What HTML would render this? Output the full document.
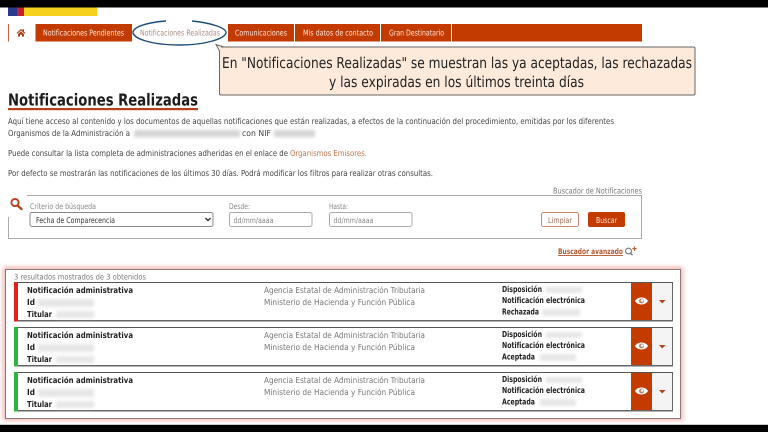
<!DOCTYPE html>
<html lang="es">
<head>
<meta charset="utf-8">
<title>Notificaciones Realizadas</title>
<style>
html,body{margin:0;padding:0;background:#fff;width:768px;height:432px;overflow:hidden}
svg{display:block}
text{font-family:"DejaVu Sans","Liberation Sans",sans-serif;white-space:pre;text-rendering:geometricPrecision}
</style>
</head>
<body>
<svg width="768" height="432" viewBox="0 0 768 432" xmlns="http://www.w3.org/2000/svg">
<defs>
<filter id="s" x="-5%" y="-5%" width="110%" height="110%"><feGaussianBlur stdDeviation="0.35"/></filter>
<filter id="b" x="-20%" y="-50%" width="140%" height="200%"><feGaussianBlur stdDeviation="1.6"/></filter>
<filter id="g" x="-3%" y="-8%" width="106%" height="116%"><feGaussianBlur stdDeviation="2"/></filter>
<g id="eye">
<path d="M-6.500 0C-4 -4.600 4 -4.600 6.500 0C4 4.600 -4 4.600 -6.500 0Z" fill="#fff"/>
<circle r="2.500" fill="#b9846c"/>
<circle cx="0.600" cy="-0.500" r="1.300" fill="#fff"/>
</g>
</defs>

<rect width="768" height="432" fill="#fff"/>

<!-- flag -->
<rect x="8" y="7" width="9" height="9" fill="#2b3a8c"/>
<rect x="17" y="7" width="7" height="9" fill="#c4202c"/>
<rect x="24" y="7" width="73" height="9" fill="#f6d21f"/>

<g filter="url(#s)">
<!-- nav -->
<rect x="8" y="24" width="1" height="17.500" fill="#c4623a"/>
<path d="M16.500 33L21 29L22.600 30.400V29.200H24V31.600L25.500 33L24.600 33.600L21 30.500L17.400 33.600ZM18 34L21 31.400L24 34V36.600H22V34.700H20V36.600H18Z" fill="#a8431f"/>
<rect x="35.500" y="24" width="96.500" height="17.500" fill="#c43a05"/>
<rect x="228" y="24" width="66" height="17.500" fill="#c43a05"/>
<rect x="295" y="24" width="85" height="17.500" fill="#c43a05"/>
<rect x="381" y="24" width="70" height="17.500" fill="#c43a05"/>
<rect x="452" y="24" width="190" height="17.500" fill="#c43a05"/>
<g font-size="8" fill="#fbe5da">
<text x="43" y="35.500" textLength="81" lengthAdjust="spacingAndGlyphs">Notificaciones Pendientes</text>
<text x="235" y="35.500" textLength="52" lengthAdjust="spacingAndGlyphs">Comunicaciones</text>
<text x="303" y="35.500" textLength="70" lengthAdjust="spacingAndGlyphs">Mis datos de contacto</text>
<text x="389" y="35.500" textLength="55" lengthAdjust="spacingAndGlyphs">Gran Destinatario</text>
</g>
<text x="140" y="35.500" font-size="8" fill="#a88c80" textLength="80" lengthAdjust="spacingAndGlyphs">Notificaciones Realizadas</text>
<path d="M166 21C146 22.500 134 27 133 32C132.500 38 150 45 180 45C205 45 224 39 226 33C226.500 28 212 23 192 21" fill="none" stroke="#1f4e79" stroke-width="1.400"/>

<!-- callout -->
<path d="M221 47H693.500Q695 47 695 48.500V93.500Q695 95 693.500 95H221Q219.500 95 219.500 93.500V51L216 44.500L224 47Z" fill="#fdeadb" stroke="#666" stroke-width="1"/>
<text x="222" y="68" font-size="15" fill="#222" textLength="470" lengthAdjust="spacingAndGlyphs">En "Notificaciones Realizadas" se muestran las ya aceptadas, las rechazadas</text>
<text x="329" y="87" font-size="15" fill="#222" textLength="255" lengthAdjust="spacingAndGlyphs">y las expiradas en los últimos treinta días</text>

<!-- title -->
<text x="8" y="105.500" font-size="16.500" font-weight="700" fill="#1a1a1a" textLength="190" lengthAdjust="spacingAndGlyphs">Notificaciones Realizadas</text>
<rect x="8" y="108" width="190" height="2.200" fill="#b5411a"/>

<!-- paragraphs -->
<g font-size="8.300" fill="#444">
<text x="8" y="124" textLength="606" lengthAdjust="spacingAndGlyphs">Aquí tiene acceso al contenido y los documentos de aquellas notificaciones que están realizadas, a efectos de la continuación del procedimiento, emitidas por los diferentes</text>
<text x="8" y="136" textLength="122" lengthAdjust="spacingAndGlyphs">Organismos de la Administración a</text>
<text x="242" y="136" textLength="29" lengthAdjust="spacingAndGlyphs">con NIF</text>
<text x="8" y="156" textLength="280" lengthAdjust="spacingAndGlyphs">Puede consultar la lista completa de administraciones adheridas en el enlace de</text>
<text x="290" y="156" fill="#c0764f" textLength="77" lengthAdjust="spacingAndGlyphs">Organismos Emisores.</text>
<text x="8" y="176" textLength="425" lengthAdjust="spacingAndGlyphs">Por defecto se mostrarán las notificaciones de los últimos 30 días. Podrá modificar los filtros para realizar otras consultas.</text>
</g>

<!-- search box -->
<path d="M27 195.500H641.500V238.500H8.500V217" fill="none" stroke="#aaa" stroke-width="1"/>
<text x="553" y="193.500" font-size="8" fill="#777" textLength="89" lengthAdjust="spacingAndGlyphs">Buscador de Notificaciones</text>
<circle cx="15" cy="202.500" r="3.600" fill="none" stroke="#b5411a" stroke-width="1.900"/>
<path d="M17.500 205.500L21.500 209" stroke="#b5411a" stroke-width="2.300" stroke-linecap="round"/>
<g font-size="7.800" fill="#888">
<text x="30" y="209" textLength="66" lengthAdjust="spacingAndGlyphs">Criterio de búsqueda</text>
<text x="229" y="209" textLength="21" lengthAdjust="spacingAndGlyphs">Desde:</text>
<text x="329" y="209" textLength="19" lengthAdjust="spacingAndGlyphs">Hasta:</text>
</g>
<rect x="30" y="212.500" width="183" height="14" rx="2" fill="#fff" stroke="#888" stroke-width="1"/>
<text x="36" y="223" font-size="8" fill="#333" textLength="79" lengthAdjust="spacingAndGlyphs">Fecha de Comparecencia</text>
<path d="M205.500 218L208 220.500L210.500 218" fill="none" stroke="#333" stroke-width="1.400"/>
<rect x="229.500" y="212.500" width="82.500" height="14" rx="2" fill="#fff" stroke="#aaa" stroke-width="1"/>
<rect x="329.500" y="212.500" width="82.500" height="14" rx="2" fill="#fff" stroke="#aaa" stroke-width="1"/>
<g font-size="7.800" fill="#888">
<text x="233.500" y="223" textLength="40" lengthAdjust="spacingAndGlyphs">dd/mm/aaaa</text>
<text x="333.500" y="223" textLength="40" lengthAdjust="spacingAndGlyphs">dd/mm/aaaa</text>
</g>
<rect x="541.500" y="212.500" width="37" height="14" rx="2" fill="#fff" stroke="#c08a70" stroke-width="1"/>
<text x="548" y="223" font-size="8" fill="#9a6a55" textLength="24" lengthAdjust="spacingAndGlyphs">Limpiar</text>
<rect x="588" y="212" width="37" height="15" rx="2" fill="#c43a05"/>
<text x="596" y="223" font-size="8" fill="#fbe5da" textLength="21" lengthAdjust="spacingAndGlyphs">Buscar</text>

<!-- advanced -->
<text x="558" y="254" font-size="7.800" font-weight="700" fill="#b5562c" textLength="65" lengthAdjust="spacingAndGlyphs">Buscador avanzado</text>
<rect x="558" y="255" width="65" height="0.900" fill="#b5562c"/>
<circle cx="628.500" cy="251" r="2.900" fill="none" stroke="#666" stroke-width="1"/>
<path d="M630.500 253.200L632.500 255.200" stroke="#666" stroke-width="1.200"/>
<path d="M634.500 246.500V251M632.300 248.700H636.700" stroke="#b5562c" stroke-width="1.100"/>
</g>

<!-- results -->
<rect x="5" y="269" width="676" height="149.500" fill="none" stroke="#f3a3a3" stroke-width="3.500" filter="url(#g)"/>
<rect x="5.500" y="269.500" width="675" height="149" fill="#fff" stroke="#8a7a7a" stroke-width="1"/>

<g filter="url(#s)">
<text x="14" y="279.500" font-size="7.800" fill="#777" textLength="132" lengthAdjust="spacingAndGlyphs">3 resultados mostrados de 3 obtenidos</text>

<!-- row 1 -->
<g>
<rect x="14.500" y="282.500" width="658" height="38.500" fill="#fff" stroke="#666" stroke-width="1"/>
<rect x="14" y="282" width="659" height="1" fill="#555"/>
<rect x="14" y="320" width="659" height="1.500" fill="#666"/>
<rect x="14" y="282" width="4" height="39.500" fill="#e2231f"/>
<rect x="652" y="283" width="20" height="37" fill="#f4f4f4"/>
<rect x="631" y="283" width="21" height="37" fill="#c43a05"/>
<use href="#eye" x="641.500" y="301"/>
<path d="M659 300H665.500L662.200 303.500Z" fill="#b5411a"/>
<g font-size="8.300" font-weight="700" fill="#222">
<text x="27" y="293" textLength="106" lengthAdjust="spacingAndGlyphs">Notificación administrativa</text>
<text x="27" y="305" textLength="8" lengthAdjust="spacingAndGlyphs">Id</text>
<text x="27" y="317" textLength="25" lengthAdjust="spacingAndGlyphs">Titular</text>
<text x="502" y="292" textLength="40" lengthAdjust="spacingAndGlyphs">Disposición</text>
<text x="502" y="303" textLength="83" lengthAdjust="spacingAndGlyphs">Notificación electrónica</text>
<text x="502" y="314.500" textLength="37" lengthAdjust="spacingAndGlyphs">Rechazada</text>
</g>
<g font-size="8.300" fill="#777">
<text x="264" y="293" textLength="161" lengthAdjust="spacingAndGlyphs">Agencia Estatal de Administración Tributaria</text>
<text x="264" y="305" textLength="151" lengthAdjust="spacingAndGlyphs">Ministerio de Hacienda y Función Pública</text>
</g>
</g>

<!-- row 2 -->
<g transform="translate(0,45)">
<rect x="14.500" y="282.500" width="658" height="38.500" fill="#fff" stroke="#666" stroke-width="1"/>
<rect x="14" y="282" width="659" height="1" fill="#555"/>
<rect x="14" y="320" width="659" height="1.500" fill="#666"/>
<rect x="14" y="282" width="4" height="39.500" fill="#2fb344"/>
<rect x="652" y="283" width="20" height="37" fill="#f4f4f4"/>
<rect x="631" y="283" width="21" height="37" fill="#c43a05"/>
<use href="#eye" x="641.500" y="301"/>
<path d="M659 300H665.500L662.200 303.500Z" fill="#b5411a"/>
<g font-size="8.300" font-weight="700" fill="#222">
<text x="27" y="293" textLength="106" lengthAdjust="spacingAndGlyphs">Notificación administrativa</text>
<text x="27" y="305" textLength="8" lengthAdjust="spacingAndGlyphs">Id</text>
<text x="27" y="317" textLength="25" lengthAdjust="spacingAndGlyphs">Titular</text>
<text x="502" y="292" textLength="40" lengthAdjust="spacingAndGlyphs">Disposición</text>
<text x="502" y="303" textLength="83" lengthAdjust="spacingAndGlyphs">Notificación electrónica</text>
<text x="502" y="314.500" textLength="33" lengthAdjust="spacingAndGlyphs">Aceptada</text>
</g>
<g font-size="8.300" fill="#777">
<text x="264" y="293" textLength="161" lengthAdjust="spacingAndGlyphs">Agencia Estatal de Administración Tributaria</text>
<text x="264" y="305" textLength="151" lengthAdjust="spacingAndGlyphs">Ministerio de Hacienda y Función Pública</text>
</g>
</g>

<!-- row 3 -->
<g transform="translate(0,90)">
<rect x="14.500" y="282.500" width="658" height="38.500" fill="#fff" stroke="#666" stroke-width="1"/>
<rect x="14" y="282" width="659" height="1" fill="#555"/>
<rect x="14" y="320" width="659" height="1.500" fill="#666"/>
<rect x="14" y="282" width="4" height="39.500" fill="#2fb344"/>
<rect x="652" y="283" width="20" height="37" fill="#f4f4f4"/>
<rect x="631" y="283" width="21" height="37" fill="#c43a05"/>
<use href="#eye" x="641.500" y="301"/>
<path d="M659 300H665.500L662.200 303.500Z" fill="#b5411a"/>
<g font-size="8.300" font-weight="700" fill="#222">
<text x="27" y="293" textLength="106" lengthAdjust="spacingAndGlyphs">Notificación administrativa</text>
<text x="27" y="305" textLength="8" lengthAdjust="spacingAndGlyphs">Id</text>
<text x="27" y="317" textLength="25" lengthAdjust="spacingAndGlyphs">Titular</text>
<text x="502" y="292" textLength="40" lengthAdjust="spacingAndGlyphs">Disposición</text>
<text x="502" y="303" textLength="83" lengthAdjust="spacingAndGlyphs">Notificación electrónica</text>
<text x="502" y="314.500" textLength="33" lengthAdjust="spacingAndGlyphs">Aceptada</text>
</g>
<g font-size="8.300" fill="#777">
<text x="264" y="293" textLength="161" lengthAdjust="spacingAndGlyphs">Agencia Estatal de Administración Tributaria</text>
<text x="264" y="305" textLength="151" lengthAdjust="spacingAndGlyphs">Ministerio de Hacienda y Función Pública</text>
</g>
</g>
</g>

<!-- redacted blurs -->
<g fill="#d4d4d4" filter="url(#b)">
<rect x="134" y="130" width="106" height="7"/>
<rect x="274" y="130" width="41" height="7"/>
</g>
<g fill="#e6e6e6" filter="url(#b)">
<rect x="38" y="299" width="56" height="8"/>
<rect x="56" y="311" width="38" height="7"/>
<rect x="546" y="287" width="36" height="6"/>
<rect x="542" y="309" width="38" height="7"/>
<rect x="38" y="344" width="56" height="8"/>
<rect x="56" y="356" width="38" height="7"/>
<rect x="546" y="332" width="36" height="6"/>
<rect x="540" y="354" width="36" height="7"/>
<rect x="38" y="389" width="56" height="8"/>
<rect x="56" y="401" width="38" height="7"/>
<rect x="546" y="377" width="36" height="6"/>
<rect x="540" y="399" width="36" height="7"/>
</g>

<!-- letterbox bars -->
<rect x="0" y="0" width="768" height="7.500" fill="#000"/>
<rect x="0" y="424.800" width="768" height="7.200" fill="#000"/>
</svg>
</body>
</html>
